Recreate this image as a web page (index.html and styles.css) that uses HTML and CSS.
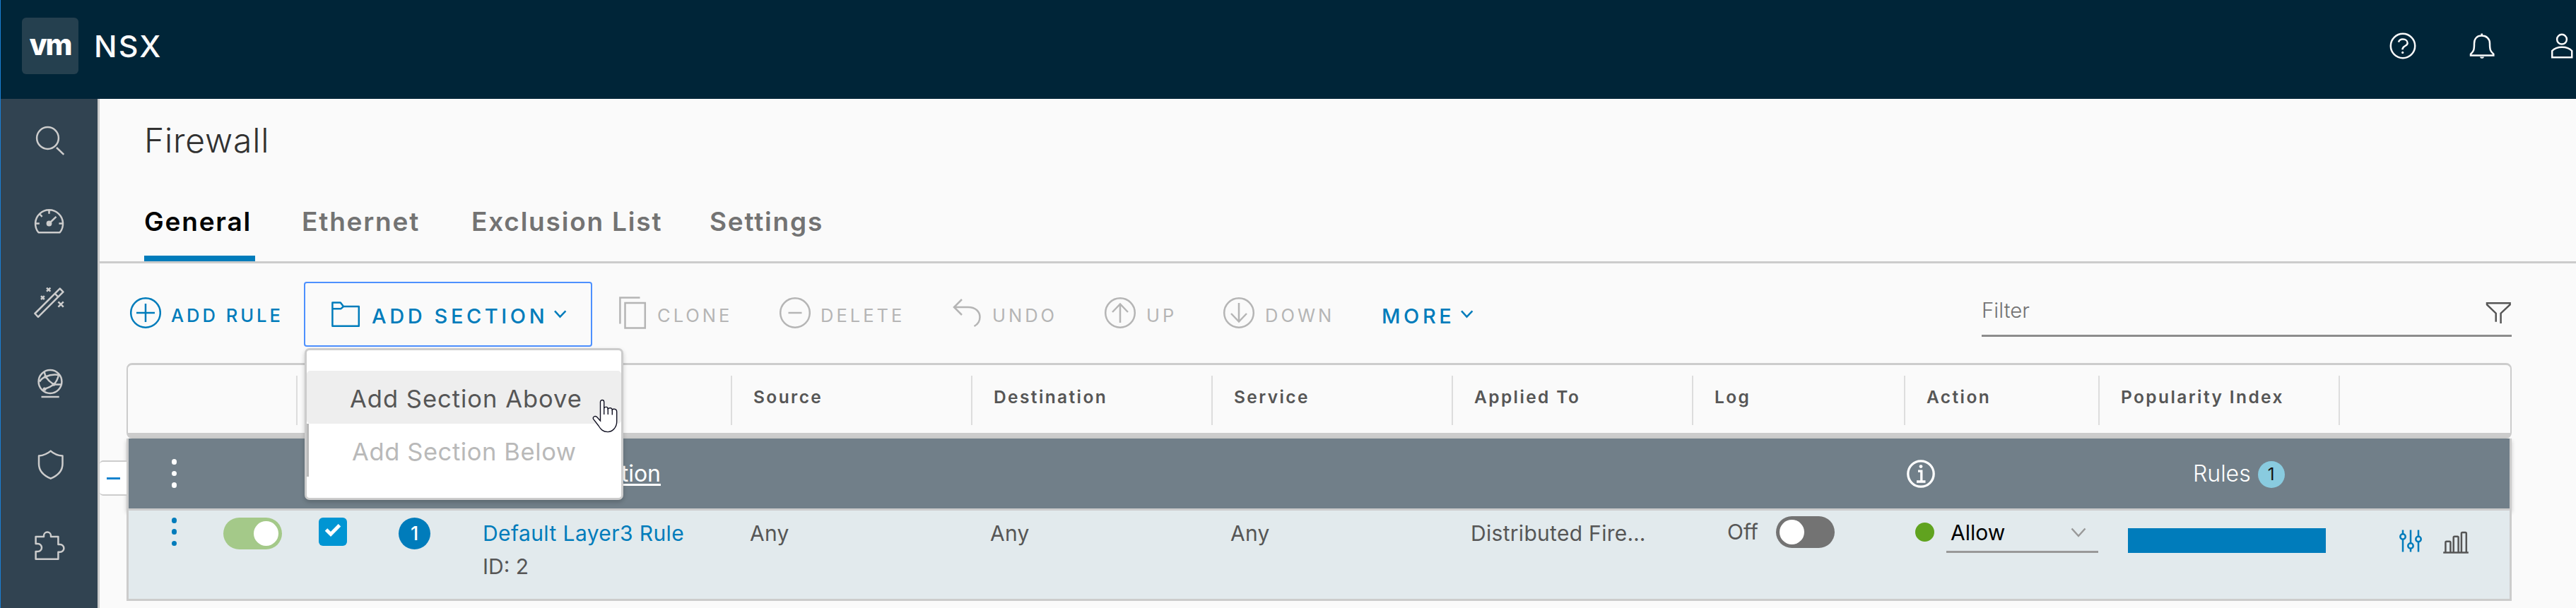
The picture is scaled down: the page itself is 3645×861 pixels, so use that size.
FILE: index.html
```
<!DOCTYPE html>
<html lang="en">
<head>
<meta charset="utf-8">
<title>NSX | Firewall</title>
<link rel="stylesheet" href="styles.css">
</head>
<body>
<header class="topbar">
  <div class="logo">vm</div>
  <div class="product"><span>NSX</span></div>
  <div class="top-actions">
    <svg class="ico-help" width="40" height="40" viewBox="0 0 40 40"><circle cx="20" cy="20" r="17.2"/><path d="M13.9 14.6C15 11.5 17.3 10.6 20 10.6C24 10.6 26.6 12.8 26.6 16C26.6 20.6 19.4 19.5 19.4 25.2"/><circle class="dot" cx="19.7" cy="29.4" r="1.6"/></svg>
    <svg class="ico-bell" width="40" height="40" viewBox="0 0 40 40"><path d="M19.7 2.4V5.6M19.7 5.6C13 5.6 9 9.8 9 16.5C9 26 8.2 27.5 4 31.6V33.6H36.3V31.6C32 27.5 31 26 31 16.5C31 9.8 26.4 5.6 19.7 5.6Z"/><path class="dot" d="M17 35.5H23C22.5 38.6 17.5 38.6 17 35.5Z"/></svg>
    <svg class="ico-user" width="34" height="40" viewBox="0 0 34 40"><circle cx="17" cy="10.7" r="6.9"/><path d="M3.2 36.2V27C6.5 23.4 11.5 21.8 17.2 21.8S27.9 23.4 31.2 27V36.2Z"/></svg>
  </div>
</header>
<div class="shell">
  <nav class="sidebar">
    <svg viewBox="0 0 44 44"><circle cx="19.5" cy="18.5" r="15.4"/><path d="M32 32L42.3 41.8"/></svg>
    <svg viewBox="0 0 44 44"><path d="M6.5 37.2A19.5 19.5 0 1 1 36.6 37.2ZM21.5 5V10.8M2 24.5H7.8M35.4 24.5H41M8 11L11.6 14.8M21.5 24.5L31.5 14.8"/><circle class="fill" cx="21.5" cy="24.5" r="3.9"/></svg>
    <svg viewBox="0 0 44 44"><path d="M36.8 1.6L41.4 6.4L6 41.8L1.4 37ZM29.3 8.4L34 13.2M18 .6L23.4 5.6M23.4 .6L18 5.6M10 12.2L14.8 17M14.8 12.2L10 17M34.4 20.4L41.8 27.6M41.8 20.4L34.4 27.6"/></svg>
    <svg viewBox="0 0 44 44"><circle cx="23" cy="18.5" r="16.4"/><path d="M10.5 40H35.7M8 18.5Q11 13.5 16.5 11.5M16.5 11.5L14.5 4M16.5 11.5Q25 7.5 35.5 9M16.5 11.5Q21 18 28 22.5M28 22.5Q33.5 17 35 8.6M28 22.5H39M28 22.5Q22 27 15 29L12.5 31"/><circle class="fill" cx="16.5" cy="11.5" r="2.3"/><circle class="fill" cx="28" cy="22.5" r="2.3"/><circle class="fill" cx="15" cy="29" r="2.5"/></svg>
    <svg viewBox="0 0 44 44"><path d="M23.7 1.6C19 5.6 13 8 7 8.6V20C7 30 14 36.5 23.7 40.7C33.5 36.5 40.5 30 40.5 20V8.6C34 8 28 5.6 23.7 1.6Z"/></svg>
    <svg viewBox="0 0 44 44"><path d="M2.6 8H14V6.6A5 5 0 0 1 24 6.6V8H34.4V19H37A5.4 5.4 0 0 1 37 29.8H34.4V39.8H2.6V29H5.5A5.5 5.5 0 0 0 5.5 18H2.6Z"/></svg>
  </nav>
  <main class="main">
    <h1 class="title"><span>Firewall</span></h1>
    <div class="tabs">
      <div class="tab active"><span>General</span></div>
      <div class="tab"><span>Ethernet</span></div>
      <div class="tab"><span>Exclusion List</span></div>
      <div class="tab"><span>Settings</span></div>
    </div>
    <div class="toolbar">
      <div class="tool primary"><svg width="44" height="46" viewBox="0 0 44 46"><circle cx="22" cy="23" r="20.8"/><path d="M22 10V36M9 23H35"/></svg><span class="add-rule">ADD RULE</span></div>
      <div class="dropdown">
        <button class="add-section"><svg width="42" height="38" viewBox="0 0 42 38"><path d="M2.4 2.4H13.8L18 8H39.8V35.8H2.4ZM2.4 11.2H14.5L18 8"/></svg><span class="big">ADD SECTION</span><svg class="chev" width="20" height="14" viewBox="0 0 20 14"><path d="M2 2.4L9.5 10.6L17.4 2.4"/></svg></button>
        <div class="menu">
          <div class="item hover"><span>Add Section Above</span></div>
          <div class="item disabled"><span>Add Section Below</span></div>
          <svg class="cursor" width="37" height="49" viewBox="0 0 37 49"><path d="M11.5 31V4.2C11.5.6 16.7.6 16.7 4.2V13C18 10.6 22 10.8 22.3 14C24 12 28 12.4 28.3 15.2C30 13.4 34.7 14 34.7 18V32C34.7 40 29 46.6 22 46.6C15 46.6 12 43 9 38L1.8 28.6C0 25.6 3.8 23 6.6 25.6Z"/><path d="M16.7 12V22M22.3 13V22M28.3 15V22.6"/></svg>
        </div>
      </div>
      <div class="tool clone"><svg width="40" height="48" viewBox="0 0 40 48"><path d="M2.4 39.5V2.5H30.5M9.5 10H37.8V45.4H9.5Z"/></svg><span>CLONE</span></div>
      <div class="tool"><svg width="44" height="46" viewBox="0 0 44 46"><circle cx="22" cy="23" r="20.8"/><path d="M12.5 23H31.5"/></svg><span>DELETE</span></div>
      <div class="tool undo"><svg width="41" height="46" viewBox="0 0 41 46"><path d="M13 4L2 15L13 26M2 15H22C32 15 38.5 21 38.5 29C38.5 35 36 39 30.5 42"/></svg><span>UNDO</span></div>
      <div class="tool"><svg width="46" height="46" viewBox="0 0 46 46"><circle cx="23" cy="23" r="20.8"/><path d="M23 37V11M12 22L23 10.5L34 22"/></svg><span>UP</span></div>
      <div class="tool"><svg width="46" height="46" viewBox="0 0 46 46"><circle cx="23" cy="23" r="20.8"/><path d="M23 9V35M12 24L23 35.5L34 24"/></svg><span>DOWN</span></div>
      <div class="more"><span class="big">MORE</span><svg class="chev" width="20" height="14" viewBox="0 0 20 14"><path d="M2 2.4L9.5 10.6L17.4 2.4"/></svg></div>
      <div class="filter"><span>Filter</span><svg width="37" height="34" viewBox="0 0 37 34"><path d="M14.7 28.8V16.7L2 4.5V2.2H34.6V4.5L21.6 16.7V31"/></svg></div>
    </div>
    <div class="grid">
      <div class="head">
        <div></div><div></div>
        <div><span>Source</span></div><div><span>Destination</span></div><div><span>Service</span></div><div><span>Applied To</span></div><div><span>Log</span></div><div><span>Action</span></div><div><span>Popularity Index</span></div><div></div>
      </div>
      <div class="row section">
        <div class="collapse"><i></i></div>
        <div class="kebab"><i></i><i></i><i></i></div>
        <div class="section-name"><span>Default Layer3 Section</span></div>
        <div class="info"><svg width="42" height="42" viewBox="0 0 42 42"><circle cx="21" cy="21" r="18.2"/><path d="M17 17.2H21.8V32M15 32H27.5"/><circle class="dot" cx="21" cy="10.6" r="2.4"/></svg></div>
        <div class="rules"><span>Rules</span><b>1</b></div>
      </div>
      <div class="row rule">
        <div class="kebab"><i></i><i></i><i></i></div>
        <div class="c-toggle"><div class="toggle on"></div></div>
        <div class="c-check"><div class="check"><svg width="24" height="20" viewBox="0 0 24 20"><path d="M2.5 9L9 15.5L21.5 2.8"/></svg></div></div>
        <div class="c-num"><b>1</b></div>
        <div class="c-name"><a>Default Layer3 Rule</a><span>ID: 2</span></div>
        <div class="c-txt"><span>Any</span></div>
        <div class="c-txt"><span>Any</span></div>
        <div class="c-txt"><span>Any</span></div>
        <div class="c-txt"><span>Distributed Fire…</span></div>
        <div class="c-log"><span>Off</span><div class="toggle off"></div></div>
        <div class="c-action"><i></i><div class="select"><span>Allow</span><svg width="22" height="14" viewBox="0 0 22 14"><path d="M1.5 1.5L11 12L20.5 1.5"/></svg></div></div>
        <div class="c-pop"><div class="bar"></div></div>
        <div class="c-end">
          <svg class="sliders" width="34" height="34" viewBox="0 0 34 34"><path d="M6 1.5V7.3M6 14.7V32.4M17 1.5V20.3M17 27.7V32.4M28 1.5V10.8M28 18.2V32.4"/><circle cx="6" cy="11" r="3.7"/><circle cx="17" cy="24" r="3.7"/><circle cx="28" cy="14.5" r="3.7"/></svg>
          <svg class="chart" width="38" height="36" viewBox="0 0 38 36"><path d="M1.2 33.4H36.8M4.4 33V19.2Q4.4 17.8 5.8 17.8H10Q11.4 17.8 11.4 19.2V33M15.7 33V12.2Q15.7 10.8 17.1 10.8H21.2Q22.6 10.8 22.6 12.2V33M26.9 33V6.4Q26.9 5 28.3 5H32.4Q33.8 5 33.8 6.4V33"/></svg>
        </div>
      </div>
    </div>
  </main>
</div>
</body>
</html>
```

FILE: styles.css
```
* { box-sizing: border-box; }
body { margin: 0; width: 3645px; height: 861px; overflow: hidden; background: #fafafa; color: #565656; font-family: Inter, "Open Sans", sans-serif; font-size: 30px; font-weight: 370; border-left: 1px solid #1a7fd4; }
svg { display: block; flex: none; fill: none; stroke: currentColor; stroke-width: 2.5; }
span, a, b { white-space: nowrap; }

.topbar { height: 140px; background: #002538; color: #fafafa; display: flex; align-items: flex-start; }
.logo { margin: 25px 0 0 30px; width: 80px; height: 80px; border-radius: 6px; background: #25404f; color: #fff; font: 800 41px/76px Inter, sans-serif; letter-spacing: -2px; text-align: center; }
.product { margin-left: 22px; height: 130px; display: flex; align-items: center; font-size: 43px; font-weight: 450; letter-spacing: 2.2px; }
.top-actions { margin: 45px 3px 0 auto; display: flex; }
.top-actions .dot, .info .dot { fill: currentColor; stroke: none; }
.ico-help { margin-right: 72px; }
.ico-bell { margin-right: 76px; }

.shell { display: flex; height: 721px; }
.sidebar { width: 140px; flex: none; background: #314351; border-right: 3px solid #ccc; padding-top: 1px; color: #ccc; }
.sidebar svg { width: 44px; height: 44px; margin: 35.5px 0 71px 47px; stroke-width: 2.5; stroke-linejoin: round; }
.sidebar svg + svg { margin-top: 0; }
.sidebar .fill { fill: currentColor; stroke: none; }

.main { flex: 1; min-width: 0; }
.title { margin: 0; height: 117px; padding: 0 0 0 63px; display: flex; align-items: center; color: #313131; font-size: 48px; font-weight: 320; letter-spacing: .8px; }
.tabs { height: 116px; padding-left: 63px; border-bottom: 3px solid #ccc; display: grid; grid-template-columns: 223px 240px 337px auto; color: #737373; font-size: 37px; font-weight: 580; letter-spacing: 1.8px; }
.tab { height: 113px; display: flex; align-items: center; }
.tab span { margin-top: -1px; }
.tab.active { width: 157px; color: #000; border-bottom: 8px solid #007cbb; padding-top: 8px; }

.toolbar { height: 141px; padding: 26px 0 0 43px; display: grid; grid-template-columns: 246px 445px 228px 245px 214px 168px 225px 849px 750px; align-items: start; color: #b5b5b5; }
.tool { height: 92px; display: flex; align-items: center; font-size: 25.5px; font-weight: 400; letter-spacing: 4px; }
.tool svg { margin: -4px 14px 0 0; }
.tool span { margin-top: 2px; }
.tool.primary, .add-section, .more { color: #007cbb; }
.tool.primary { font-weight: 450; }
.tool.clone svg, .tool.undo svg { margin-right: 15px; }
.dropdown { position: relative; width: 408px; height: 92px; }
.add-section { width: 408px; height: 92px; padding: 0 0 0 36px; background: none; border: 2px solid #4d90fe; border-radius: 4px; display: flex; align-items: center; font: inherit; }
.add-section > svg:first-child { margin: 0 16px 0 0; stroke-linejoin: round; }
.big { font-size: 29px; font-weight: 480; letter-spacing: 4.6px; margin-top: 5px; }
.chev { margin: -1px 0 0 8px; }
.more { height: 92px; display: flex; align-items: center; }
.filter { height: 78px; border-bottom: 3px solid #8c8c8c; display: flex; justify-content: space-between; padding: 2px 0 0 0; font-size: 29.5px; font-weight: 320; color: #737373; }
.filter span { line-height: 76px; }
.filter svg { color: #565656; margin-top: 26px; }

.menu { position: absolute; z-index: 5; left: 1px; top: 94px; width: 451px; height: 215px; padding-top: 29px; background: #fff; border: 3px solid #ccc; border-radius: 7px; box-shadow: 0 3px 6px rgba(0,0,0,.2); font-size: 34.5px; letter-spacing: 1px; }
.item { height: 75px; padding-left: 61px; display: flex; align-items: center; }
.item.hover { background: #eee; border-radius: 5px; padding-top: 4px; color: #565656; }
.item.disabled { border-left: 3px solid #b9b9b9; color: #b9b9b9; padding-top: 4px; letter-spacing: .6px; }
.cursor { position: absolute; left: 404px; top: 69px; fill: #fff; color: #112; stroke-width: 1.4; }

.grid { width: 3375px; margin-left: 38px; }
.head { height: 107px; border: 2px solid #ccc; border-top-width: 3px; border-bottom-width: 8px; border-radius: 8px; display: grid; grid-template-columns: 240px 615px 340px 340px 340px 340px 300px 275px 340px 1fr; font-size: 24.5px; font-weight: 600; letter-spacing: 2.4px; color: #565656; }
.head div { height: 70px; margin-top: 15px; padding: 0 0 11px 30px; border-right: 2px solid #ddd; display: flex; align-items: center; }
.head div:last-child { border: 0; }
.row { position: relative; border: 3px solid #ccc; border-top: 0; display: grid; }
.section { height: 102px; background: #717f89; color: #fff; grid-template-columns: 129px 1px 723px 1659px 275px 1fr; align-items: center; box-shadow: 0 3px 6px rgba(0,0,0,.2); }
.section .collapse { position: absolute; left: -41px; top: 31px; width: 38px; height: 50px; background: #fff; border: 2px solid #ccc; border-width: 2px 0; border-radius: 5px 0 0 5px; display: flex; align-items: center; justify-content: center; }
.collapse i { width: 19px; height: 3px; background: #1683ce; }
.kebab { display: flex; flex-direction: column; align-items: center; gap: 8.7px; grid-column: 1; }
.kebab i { width: 7.6px; height: 7.6px; border-radius: 50%; background: currentColor; }
.section-name { grid-column: 2 / 4; text-align: right; padding-right: 100px; font-size: 32px; text-decoration: underline; text-decoration-thickness: 3px; text-underline-offset: 3px; }
.info { grid-column: 5; padding-left: 3px; }
.info svg { stroke-width: 3.3; }
.rules { grid-column: 6; padding-left: 134px; display: flex; align-items: center; font-size: 32px; font-weight: 320; }
.rules b { width: 38px; height: 38px; margin: 3px 0 0 10px; border-radius: 50%; background: #89cbdf; color: #111; font-size: 24px; font-weight: 400; line-height: 38px; text-align: center; }

.rule { height: 128px; background: #e2eaed; grid-template-columns: 129px 129px 114px 121px 360px repeat(4, 340px) 300px 275px 340px 1fr; align-items: start; }
.rule .kebab { color: #007cbb; padding-top: 10px; }
.toggle { width: 83px; height: 45px; border-radius: 23px; padding: 5px; display: flex; }
.toggle::before { content: ""; width: 35px; height: 35px; border-radius: 50%; background: #fff; }
.toggle.on { background: #a4c989; justify-content: flex-end; }
.toggle.off { background: #737373; }
.c-toggle { padding: 10px 0 0 5px; }
.c-check { padding: 10px 0 0 11px; }
.check { width: 40px; height: 40px; border-radius: 6px; background: #0095d3; color: #fff; padding: 8px 0 0 8px; }
.check svg { stroke-width: 5; }
.c-num { padding: 10px 0 0 10px; }
.c-num b { display: block; width: 45px; height: 45px; border-radius: 50%; background: #007cbb; color: #fff; font-size: 27px; font-weight: 500; line-height: 45px; text-align: center; }
.c-name { padding: 9px 0 0 8px; display: flex; flex-direction: column; line-height: 47px; }
.c-name a { color: #007cbb; letter-spacing: .4px; }
.c-txt { padding: 9px 0 0 26px; line-height: 47px; letter-spacing: .3px; }
.c-log { padding: 8px 0 0 49px; display: flex; line-height: 45px; }
.c-log .toggle { margin-left: 25px; }
.c-action { display: flex; padding: 5px 0 0 15px; }
.c-action i { width: 27px; height: 27px; border-radius: 50%; background: #60a31f; margin: 12px 17px 0 0; }
.select { width: 215px; height: 55px; border-bottom: 3px solid #999; padding: 0 17px 0 6px; display: flex; align-items: center; justify-content: space-between; color: #000; }
.select span { margin-top: -1px; }
.select svg { color: #999; }
.c-pop { padding: 25px 0 0 41px; }
.bar { width: 280px; height: 35px; background: #007cbb; }
.c-end { display: flex; padding: 26px 0 0 84px; }
.sliders { color: #007cbb; margin-right: 28px; }
.chart { color: #565656; }
```
